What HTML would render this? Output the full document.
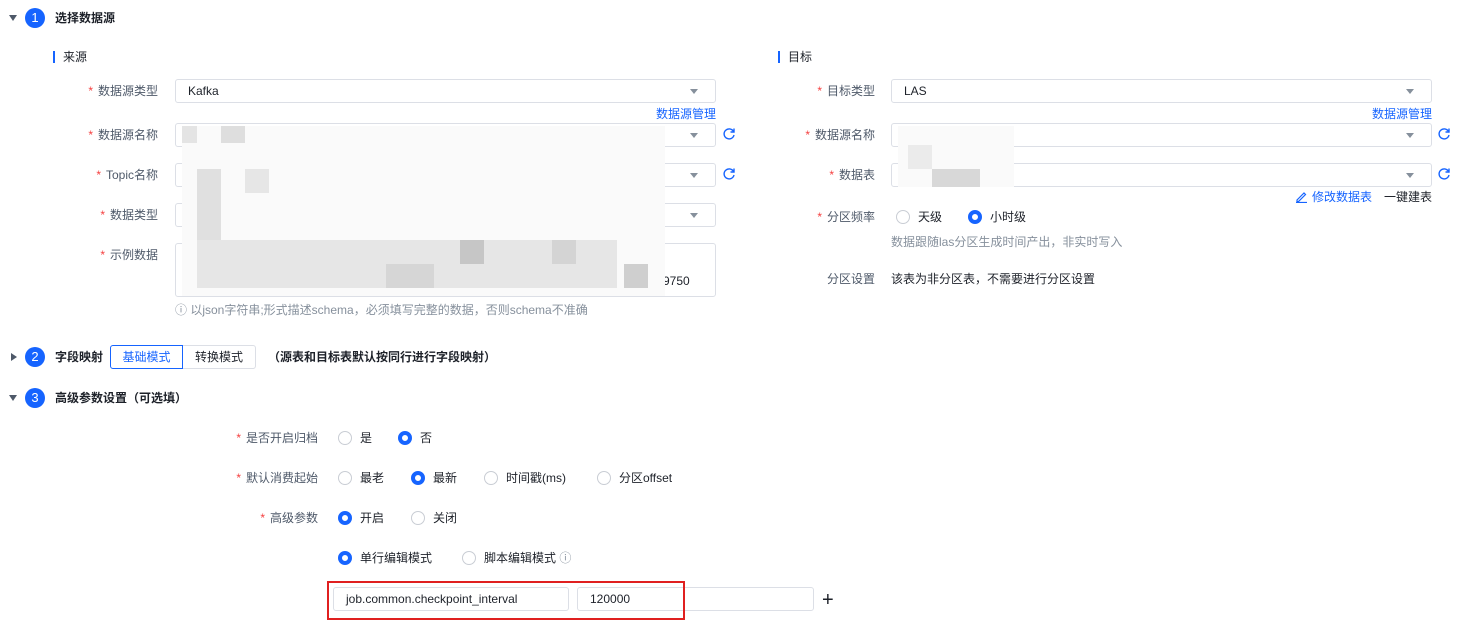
<!DOCTYPE html>
<html><head><meta charset="utf-8"><style>
*{box-sizing:border-box;margin:0;padding:0}
body{width:1461px;height:632px;background:#fff;font-family:"Liberation Sans","Noto Sans CJK SC",sans-serif;font-size:12px;color:#1d2129;position:relative;overflow:hidden}
.a{position:absolute;white-space:nowrap}
.lbl{position:absolute;text-align:right;color:#4e5969;line-height:16px}
.lbl b{color:#f53f3f;font-weight:normal;margin-right:5px}
.inp{position:absolute;border:1px solid #dcdfe6;border-radius:3px;background:#fff;height:24px;line-height:22px;padding-left:12px}
.arr{position:absolute;right:17px;top:9px;width:0;height:0;border-left:4px solid transparent;border-right:4px solid transparent;border-top:5px solid #86909c}
.num{position:absolute;width:20px;height:20px;border-radius:50%;background:#1664ff;color:#fff;text-align:center;line-height:20px;font-size:13px}
.tri{position:absolute;width:0;height:0;border-left:4px solid transparent;border-right:4px solid transparent;border-top:6px solid #4e5969}
.trir{position:absolute;width:0;height:0;border-top:4px solid transparent;border-bottom:4px solid transparent;border-left:6px solid #4e5969}
.h{position:absolute;font-weight:bold;font-size:12px;line-height:16px}
.bar{position:absolute;width:2px;height:12px;background:#1664ff}
.link{position:absolute;color:#1664ff;line-height:16px}
.r{position:absolute;width:14px;height:14px;border-radius:50%;border:1px solid #c9cdd4;background:#fff}
.r.on{border:4px solid #1664ff}
.t{position:absolute;line-height:16px}
.hint{position:absolute;color:#86909c;line-height:16px}
.px{position:absolute;background:#ececec}
</style></head><body>

<div class="tri" style="left:9px;top:15px"></div>
<div class="num" style="left:25px;top:8px">1</div>
<div class="h" style="left:55px;top:10px">选择数据源</div>

<div class="bar" style="left:53px;top:51px"></div>
<div class="t" style="left:63px;top:49px">来源</div>
<div class="bar" style="left:778px;top:51px"></div>
<div class="t" style="left:788px;top:49px">目标</div>

<div class="lbl" style="left:60px;width:98px;top:83px"><b>*</b>数据源类型</div>
<div class="inp" style="left:175px;top:79px;width:541px">Kafka<div class="arr"></div></div>
<div class="link" style="left:656px;top:106px">数据源管理</div>
<div class="lbl" style="left:60px;width:98px;top:127px"><b>*</b>数据源名称</div>
<div class="inp" style="left:175px;top:123px;width:541px"><div class="arr"></div></div>
<div class="lbl" style="left:60px;width:98px;top:167px"><b>*</b>Topic名称</div>
<div class="inp" style="left:175px;top:163px;width:541px"><div class="arr"></div></div>
<div class="lbl" style="left:60px;width:98px;top:207px"><b>*</b>数据类型</div>
<div class="inp" style="left:175px;top:203px;width:541px"><div class="arr"></div></div>
<div class="lbl" style="left:60px;width:98px;top:247px"><b>*</b>示例数据</div>
<div class="inp" style="left:175px;top:243px;width:541px;height:54px"></div>
<div class="t" style="left:663px;top:273px">9750</div>
<div class="a" style="left:182px;top:126px;width:483px;height:170px;background:#fafafa"></div>
<div class="px" style="left:182px;top:126px;width:15px;height:17px;background:#e4e4e4"></div>
<div class="px" style="left:221px;top:126px;width:24px;height:17px;background:#dedede"></div>
<div class="px" style="left:197px;top:169px;width:24px;height:72px;background:#e0e0e0"></div>
<div class="px" style="left:245px;top:169px;width:24px;height:24px;background:#e6e6e6"></div>
<div class="px" style="left:197px;top:240px;width:420px;height:48px;background:#e6e6e6"></div>
<div class="px" style="left:460px;top:240px;width:24px;height:24px;background:#c6c6c6"></div>
<div class="px" style="left:552px;top:240px;width:24px;height:24px;background:#d4d4d4"></div>
<div class="px" style="left:624px;top:264px;width:24px;height:24px;background:#cfcfcf"></div>
<div class="px" style="left:386px;top:264px;width:48px;height:24px;background:#d6d6d6"></div>
<svg class="a" style="left:722px;top:127px" width="14" height="14" viewBox="0 0 14 14"><path d="M11.5 4.5A5 5 0 1 0 12 8" fill="none" stroke="#1664ff" stroke-width="1.4"/><path d="M12 1.5V5H8.5" fill="none" stroke="#1664ff" stroke-width="1.4"/></svg>
<svg class="a" style="left:722px;top:167px" width="14" height="14" viewBox="0 0 14 14"><path d="M11.5 4.5A5 5 0 1 0 12 8" fill="none" stroke="#1664ff" stroke-width="1.4"/><path d="M12 1.5V5H8.5" fill="none" stroke="#1664ff" stroke-width="1.4"/></svg>
<div class="hint" style="left:175px;top:302px">ⓘ 以json字符串;形式描述schema，必须填写完整的数据，否则schema不准确</div>

<div class="lbl" style="left:775px;width:100px;top:83px"><b>*</b>目标类型</div>
<div class="inp" style="left:891px;top:79px;width:541px">LAS<div class="arr"></div></div>
<div class="link" style="left:1372px;top:106px">数据源管理</div>
<div class="lbl" style="left:775px;width:100px;top:127px"><b>*</b>数据源名称</div>
<div class="inp" style="left:891px;top:123px;width:541px"><div class="arr"></div></div>
<div class="lbl" style="left:775px;width:100px;top:167px"><b>*</b>数据表</div>
<div class="inp" style="left:891px;top:163px;width:541px"><div class="arr"></div></div>
<div class="a" style="left:898px;top:126px;width:116px;height:61px;background:#fafafa"></div>
<div class="px" style="left:908px;top:145px;width:24px;height:24px;background:#ebebeb"></div>
<div class="px" style="left:932px;top:169px;width:48px;height:18px;background:#d8d8d8"></div>
<svg class="a" style="left:1437px;top:127px" width="14" height="14" viewBox="0 0 14 14"><path d="M11.5 4.5A5 5 0 1 0 12 8" fill="none" stroke="#1664ff" stroke-width="1.4"/><path d="M12 1.5V5H8.5" fill="none" stroke="#1664ff" stroke-width="1.4"/></svg>
<svg class="a" style="left:1437px;top:167px" width="14" height="14" viewBox="0 0 14 14"><path d="M11.5 4.5A5 5 0 1 0 12 8" fill="none" stroke="#1664ff" stroke-width="1.4"/><path d="M12 1.5V5H8.5" fill="none" stroke="#1664ff" stroke-width="1.4"/></svg>
<svg class="a" style="left:1295px;top:190px" width="13" height="13" viewBox="0 0 13 13"><path d="M2 10L9 3l1.5 1.5-7 7H2z M1 12.5h11" fill="none" stroke="#1664ff" stroke-width="1.2"/></svg>
<div class="link" style="left:1312px;top:189px">修改数据表</div>
<div class="t" style="left:1384px;top:189px">一键建表</div>
<div class="lbl" style="left:775px;width:100px;top:209px"><b>*</b>分区频率</div>
<div class="r" style="left:896px;top:210px"></div><div class="t" style="left:918px;top:209px">天级</div>
<div class="r on" style="left:968px;top:210px"></div><div class="t" style="left:990px;top:209px">小时级</div>
<div class="hint" style="left:891px;top:234px">数据跟随las分区生成时间产出，非实时写入</div>
<div class="lbl" style="left:775px;width:100px;top:271px">分区设置</div>
<div class="t" style="left:891px;top:271px">该表为非分区表，不需要进行分区设置</div>

<div class="trir" style="left:11px;top:353px"></div>
<div class="num" style="left:25px;top:347px">2</div>
<div class="h" style="left:55px;top:349px">字段映射</div>
<div class="a" style="left:110px;top:345px;width:73px;height:24px;border:1px solid #1664ff;border-radius:3px 0 0 3px;color:#1664ff;text-align:center;line-height:22px">基础模式</div>
<div class="a" style="left:183px;top:345px;width:73px;height:24px;border:1px solid #dcdfe6;border-left:none;border-radius:0 3px 3px 0;text-align:center;line-height:22px">转换模式</div>
<div class="h" style="left:268px;top:349px">（源表和目标表默认按同行进行字段映射）</div>

<div class="tri" style="left:9px;top:395px"></div>
<div class="num" style="left:25px;top:388px">3</div>
<div class="h" style="left:55px;top:390px">高级参数设置（可选填）</div>

<div class="lbl" style="left:200px;width:118px;top:430px"><b>*</b>是否开启归档</div>
<div class="r" style="left:338px;top:431px"></div><div class="t" style="left:360px;top:430px">是</div>
<div class="r on" style="left:398px;top:431px"></div><div class="t" style="left:420px;top:430px">否</div>

<div class="lbl" style="left:200px;width:118px;top:470px"><b>*</b>默认消费起始</div>
<div class="r" style="left:338px;top:471px"></div><div class="t" style="left:360px;top:470px">最老</div>
<div class="r on" style="left:411px;top:471px"></div><div class="t" style="left:433px;top:470px">最新</div>
<div class="r" style="left:484px;top:471px"></div><div class="t" style="left:506px;top:470px">时间戳(ms)</div>
<div class="r" style="left:597px;top:471px"></div><div class="t" style="left:619px;top:470px">分区offset</div>

<div class="lbl" style="left:200px;width:118px;top:510px"><b>*</b>高级参数</div>
<div class="r on" style="left:338px;top:511px"></div><div class="t" style="left:360px;top:510px">开启</div>
<div class="r" style="left:411px;top:511px"></div><div class="t" style="left:433px;top:510px">关闭</div>

<div class="r on" style="left:338px;top:551px"></div><div class="t" style="left:360px;top:550px">单行编辑模式</div>
<div class="r" style="left:462px;top:551px"></div><div class="t" style="left:484px;top:550px">脚本编辑模式 <span style="color:#86909c">ⓘ</span></div>

<div class="inp" style="left:333px;top:587px;width:236px">job.common.checkpoint_interval</div>
<div class="inp" style="left:577px;top:587px;width:237px">120000</div>
<div class="a" style="left:822px;top:590px;font-size:20px;line-height:20px">+</div>
<div class="a" style="left:327px;top:581px;width:358px;height:39px;border:2px solid #e02020"></div>
</body></html>
